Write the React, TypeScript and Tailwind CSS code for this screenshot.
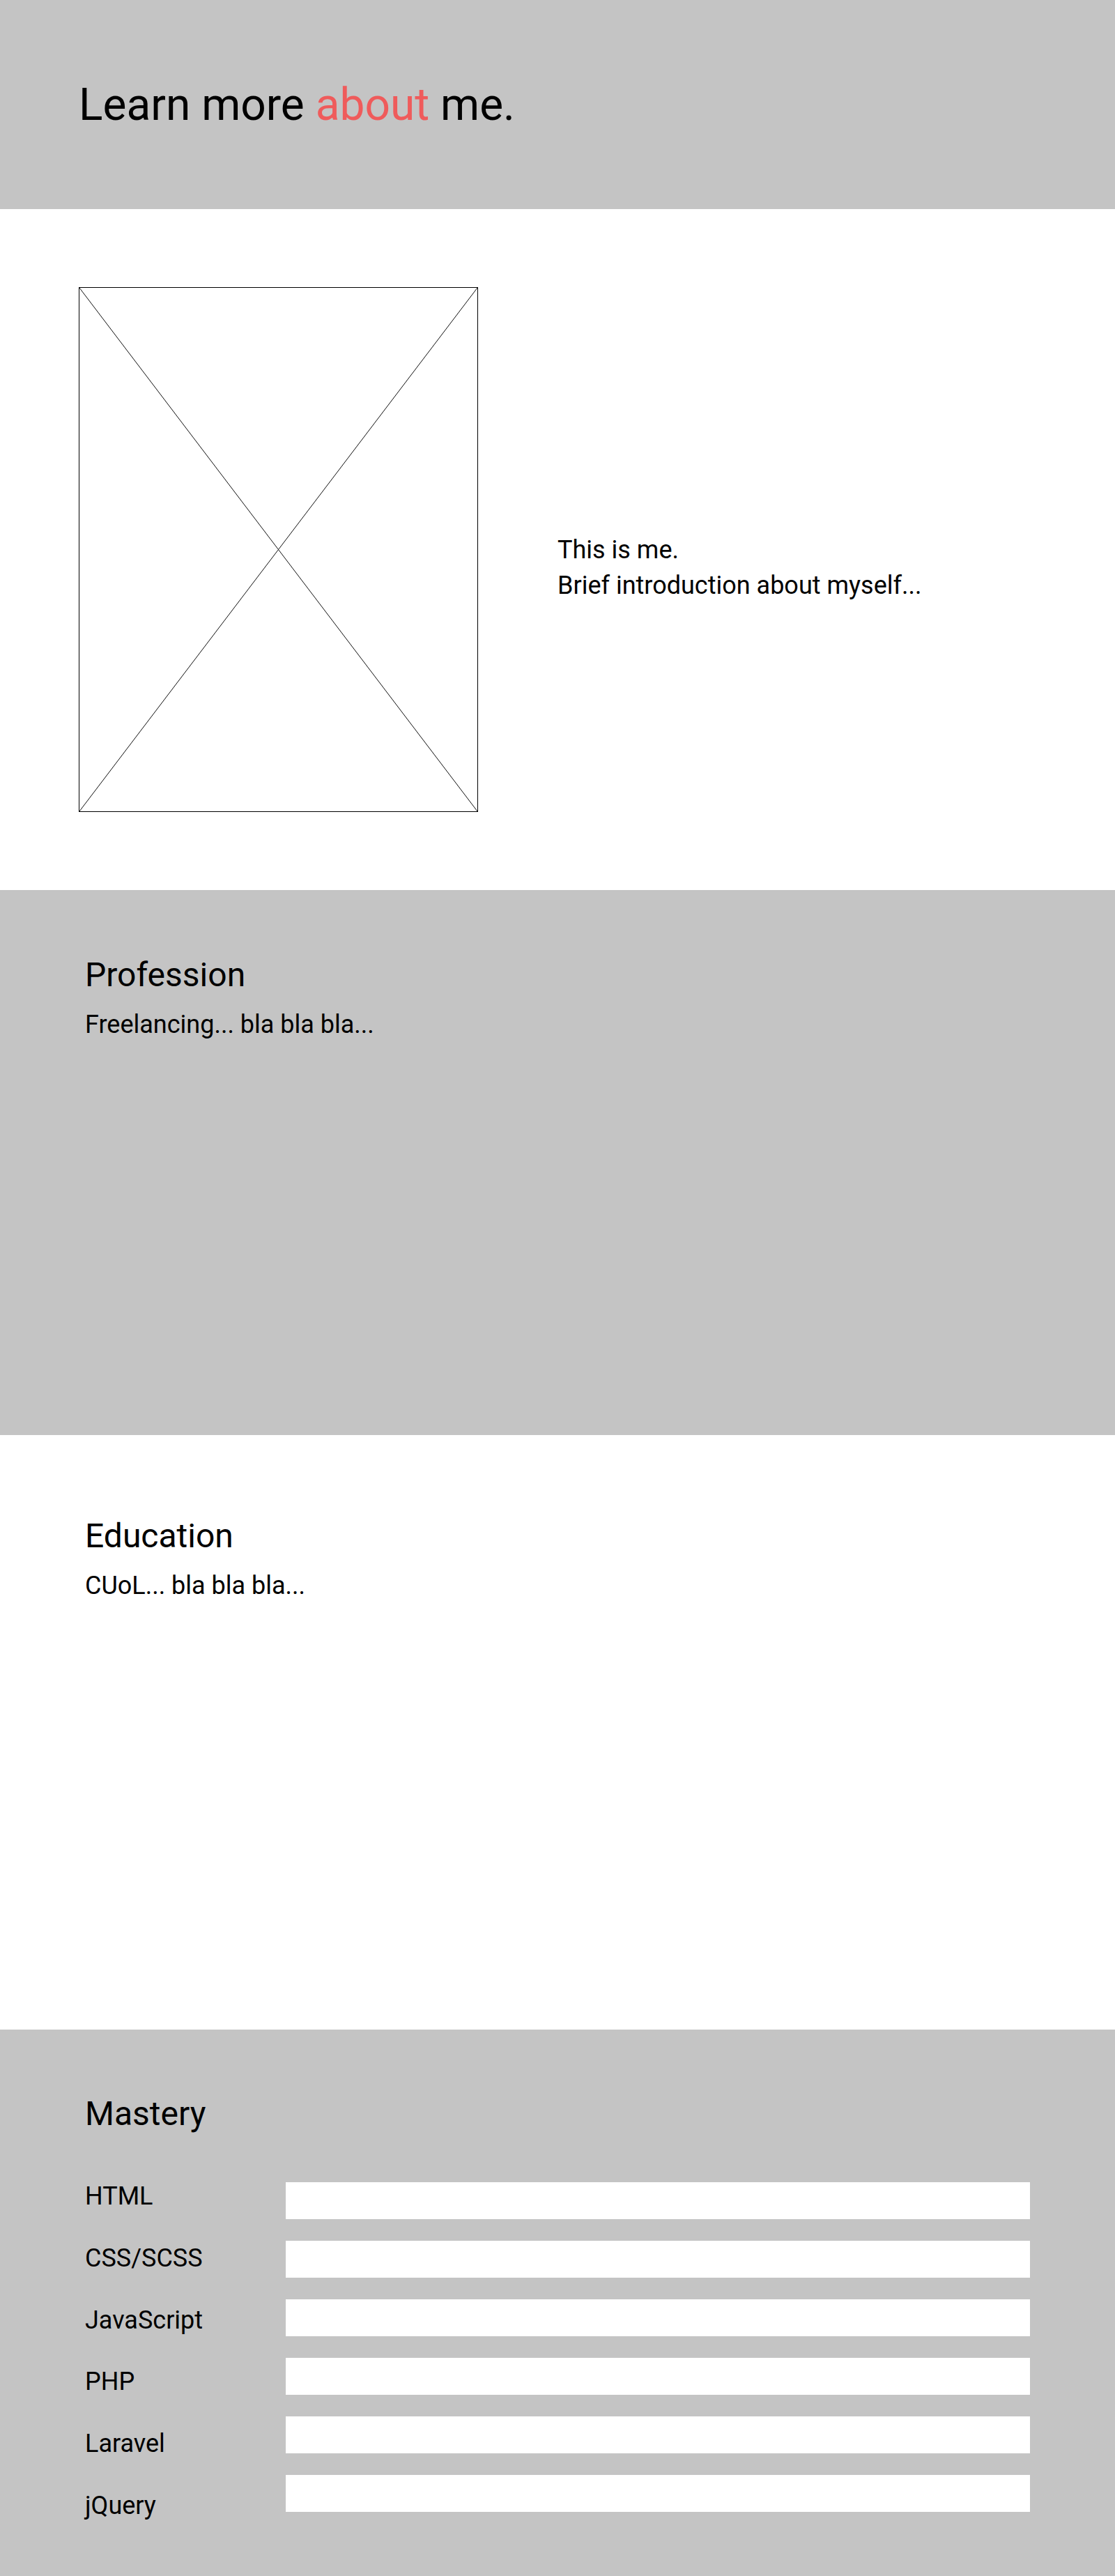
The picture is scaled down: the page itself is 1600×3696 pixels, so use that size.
import React from "react";

const skills = ["HTML", "CSS/SCSS", "JavaScript", "PHP", "Laravel", "jQuery"];

function Placeholder() {
  // wireframe image placeholder: box with a cross
  return (
    <div className="w-[573px] h-[753px] shrink-0 border border-black bg-white">
      <svg className="block w-full h-full" viewBox="0 0 100 100" preserveAspectRatio="none">
        <line x1="0" y1="0" x2="100" y2="100" stroke="#111" strokeWidth="1" vectorEffect="non-scaling-stroke" />
        <line x1="100" y1="0" x2="0" y2="100" stroke="#111" strokeWidth="1" vectorEffect="non-scaling-stroke" />
      </svg>
    </div>
  );
}

export default function App() {
  return (
    <div className="w-[1600px] font-[Roboto,sans-serif] text-black">
      {/* header */}
      <header className="h-[300px] bg-[#c4c4c4] flex items-center pl-[113px]">
        <h1 className="text-[64px] leading-[normal] font-normal">
          Learn more <span className="text-[#ef5b5b]">about</span> me.
        </h1>
      </header>

      {/* intro */}
      <section className="bg-white flex py-[112px] pl-[113px]">
        <Placeholder />
        <div className="ml-[114px] mt-[352px] text-[36px] leading-[51px]">
          <p>This is me.</p>
          <p>Brief introduction about myself...</p>
        </div>
      </section>

      {/* profession */}
      <section className="bg-[#c4c4c4] h-[782px] pl-[122px] pt-[93px]">
        <h2 className="text-[48px] leading-[normal]">Profession</h2>
        <p className="mt-[22px] text-[36px] leading-[normal]">Freelancing... bla bla bla...</p>
      </section>

      {/* education */}
      <section className="bg-white h-[853px] pl-[122px] pt-[116px]">
        <h2 className="text-[48px] leading-[normal]">Education</h2>
        <p className="mt-[22px] text-[36px] leading-[normal]">CUoL... bla bla bla...</p>
      </section>

      {/* mastery */}
      <section className="bg-[#c4c4c4] h-[784px] pl-[122px] pt-[92px]">
        <h2 className="text-[48px] leading-[normal]">Mastery</h2>
        <div className="mt-[46px] flex">
          <div className="w-[288px] flex flex-col">
            {skills.map((s) => (
              <span key={s} className="text-[36px] leading-[88.8px]">
                {s}
              </span>
            ))}
          </div>
          <div className="mt-[24px] flex flex-col gap-[31px]">
            {skills.map((s) => (
              <div key={s} className="w-[1068px] h-[53px] bg-white" />
            ))}
          </div>
        </div>
      </section>
    </div>
  );
}
